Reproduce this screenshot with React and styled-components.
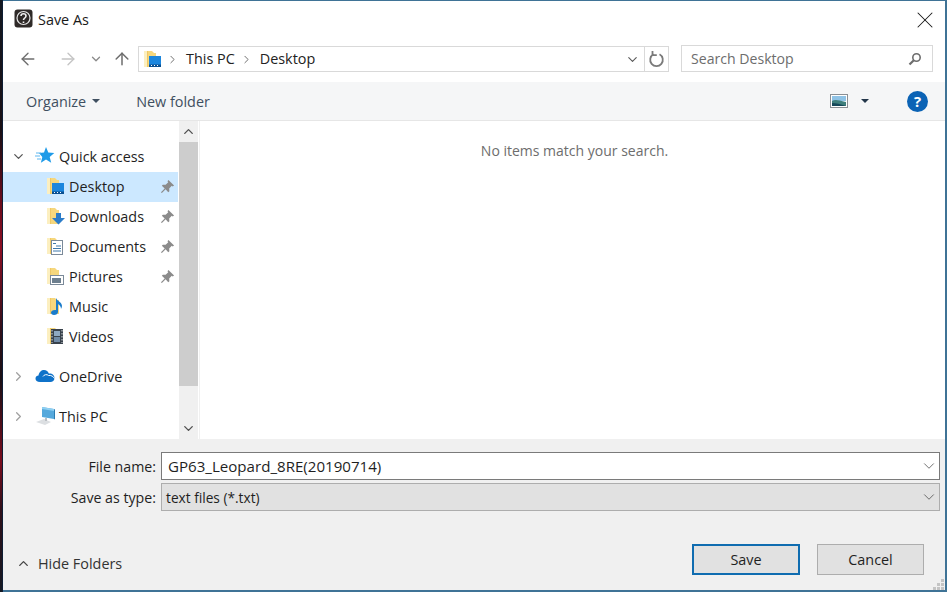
import React from 'react'
import styled, { createGlobalStyle } from 'styled-components'
import { X, ArrowLeft, ArrowRight, ArrowUp, ChevronDown, ChevronRight, ChevronUp } from 'lucide-react'

const GlobalStyle = createGlobalStyle`
  html, body { margin: 0; padding: 0; background: #fff; }
  * { box-sizing: border-box; }
  body { font-family: "Open Sans", "Noto Sans", "Liberation Sans", sans-serif; }
`

const Screen = styled.div`
  display: flex;
  width: 947px;
  height: 592px;
  overflow: hidden;
  background: #14080c;
`
const Wallpaper = styled.div`
  width: 3px;
  flex: none;
  border-right: 1px solid #0e1d33;
  background: linear-gradient(180deg, #141821 0%, #1a1015 22%, #6a0c1c 34%, #8c1024 42%, #30101a 56%, #1a1015 64%, #7a0d1e 78%, #30101a 86%, #141821 100%);
`
const Window = styled.div`
  flex: 1;
  min-width: 0;
  display: flex;
  flex-direction: column;
  border-top: 1px solid #3f7396;
  border-right: 2px solid #3f7396;
  border-bottom: 2px solid #3f7396;
  background: #fff;
  color: #1a1a1a;
  font-size: 14.4px;
`
const TitleBar = styled.div`
  height: 37px;
  flex: none;
  display: flex;
  align-items: center;
  padding: 0 6px 2px 11px;
  gap: 5px;
  font-size: 14.4px;
`
const TitleText = styled.span`
  flex: 1;
  padding-top: 2px;
`
const CloseBtn = styled.div`
  color: #1a1a1a;
  display: flex;
  margin-top: 2px;
`
const NavBar = styled.div`
  height: 44px;
  flex: none;
  display: flex;
  align-items: flex-start;
  padding: 7px 11px 0 15px;
`
const NavBtn = styled.div`
  width: ${p => p.$w}px;
  height: 27px;
  flex: none;
  margin-left: ${p => p.$ml || 0}px;
  display: flex;
  align-items: center;
  justify-content: ${p => p.$justify || 'center'};
  color: ${p => p.$color};
`
const Address = styled.div`
  width: 531px;
  height: 26px;
  flex: none;
  margin-top: 1px;
  margin-left: 6px;
  border: 1px solid #d9d9d9;
  display: flex;
  align-items: center;
  padding-left: 2px;
`
const Crumb = styled.span`
  margin-right: 5px;
  padding-bottom: 2px;
  color: #222;
`
const CrumbArrow = styled.span`
  display: flex;
  color: #6d6d6d;
  margin: 0 7px 0 ${p => p.$left || 0}px;
`
const AddressEnd = styled.div`
  margin-left: auto;
  display: flex;
  align-items: center;
  height: 100%;
`
const AddressDrop = styled.div`
  width: 24px;
  display: flex;
  justify-content: center;
  color: #5a5a5a;
`
const Refresh = styled.div`
  width: 24px;
  height: 100%;
  border-left: 1px solid #d9d9d9;
  display: flex;
  align-items: center;
  justify-content: center;
`
const Search = styled.div`
  width: 252px;
  height: 27px;
  flex: none;
  margin-left: 12px;
  border: 1px solid #d9d9d9;
  display: flex;
  align-items: center;
  justify-content: space-between;
  padding: 0 10px 0 9px;
  color: #6d6d6d;
  font-size: 14.1px;
`
const Toolbar = styled.div`
  height: 39px;
  flex: none;
  display: flex;
  align-items: center;
  padding: 0 17px 0 23px;
  background: #f5f6f7;
  border-bottom: 1px solid #e6e6e6;
  color: #3f4f60;
`
const ToolItem = styled.div`
  display: flex;
  align-items: center;
  gap: ${p => p.$gap ?? 6}px;
  margin-right: ${p => p.$mr || 0}px;
`
const Caret = styled.span`
  width: 0;
  height: 0;
  border-left: 4px solid transparent;
  border-right: 4px solid transparent;
  border-top: 4px solid ${p => p.$color || '#3f4f60'};
`
const Spacer = styled.div`
  flex: 1;
`
const HelpBadge = styled.div`
  width: 21px;
  height: 21px;
  border-radius: 50%;
  background: #0b63b5;
  color: #fff;
  font-weight: 700;
  font-size: 15px;
  display: flex;
  align-items: center;
  justify-content: center;
  margin-left: 38px;
`
const Body = styled.div`
  height: 318px;
  flex: none;
  display: flex;
  background: #fff;
`
const Sidebar = styled.div`
  width: 175px;
  flex: none;
  padding-top: 21px;
  display: flex;
  flex-direction: column;
`
const Row = styled.div`
  height: 30px;
  flex: none;
  display: flex;
  align-items: center;
  padding-left: ${p => (p.$child ? 41 : 8)}px;
  padding-bottom: 2px;
  margin-top: ${p => (p.$gap ? 10 : 0)}px;
  background: ${p => (p.$active ? '#cce8ff' : 'transparent')};
  color: #1f1f1f;
`
const Twisty = styled.span`
  width: 24px;
  display: flex;
  color: ${p => p.$color};
`
const RowIcon = styled.span`
  width: 24px;
  height: 22px;
  flex: none;
  display: flex;
  align-items: center;
  margin-right: ${p => p.$mr || 0}px;
`
const PinSlot = styled.span`
  margin-left: auto;
  margin-right: 3px;
  display: flex;
`
const Scrollbar = styled.div`
  width: 19px;
  flex: none;
  margin-left: 1px;
  background: #f0f0f0;
  display: flex;
  flex-direction: column;
`
const ScrollBtn = styled.div`
  height: 21px;
  flex: none;
  display: flex;
  align-items: center;
  justify-content: center;
  color: #505050;
`
const ScrollThumb = styled.div`
  height: 244px;
  flex: none;
  background: #cdcdcd;
`
const ScrollRest = styled.div`
  flex: 1;
`
const Content = styled.div`
  flex: 1;
  margin-left: 1px;
  border-left: 1px solid #f0f0f0;
  text-align: center;
  padding: 20px 0 0 4px;
  color: #6d6d6d;
  font-size: 14px;
`
const Footer = styled.div`
  flex: 1;
  background: #f0f0f0;
  display: flex;
  flex-direction: column;
  padding: 13px 5px 0 0;
  position: relative;
`
const FieldRow = styled.div`
  display: flex;
  align-items: center;
  height: 28px;
  margin-bottom: 3px;
`
const FieldLabel = styled.label`
  width: 158px;
  flex: none;
  text-align: right;
  padding-right: 5px;
  color: #1f1f1f;
  font-size: 14.2px;
`
const FieldBox = styled.div`
  flex: 1;
  height: 28px;
  display: flex;
  align-items: center;
  justify-content: space-between;
  padding: 0 1px 0 ${p => (p.$select ? 4 : 6)}px;
  background: ${p => (p.$select ? '#e1e1e1' : '#fff')};
  border: 1px solid ${p => (p.$select ? '#adadad' : '#7a7a7a')};
  color: #1f1f1f;
  font-size: ${p => (p.$select ? 13.7 : 15.1)}px;
`
const Bottom = styled.div`
  display: flex;
  align-items: flex-start;
  margin-top: 30px;
  padding-right: 16px;
`
const HideFolders = styled.div`
  display: flex;
  align-items: center;
  gap: 7px;
  margin: 10px 0 0 13px;
  color: #333;
`
const Button = styled.button`
  width: ${p => p.$w}px;
  height: 31px;
  margin-left: ${p => p.$ml || 0}px;
  background: #e1e1e1;
  border: ${p => (p.$primary ? '2px solid #0f6cb0' : '1px solid #adadad')};
  color: #1f1f1f;
  font: inherit;
  padding: 0;
`
const Grip = styled.svg`
  position: absolute;
  right: 0;
  bottom: 0;
`

const Folder = ({ children }) => (
  <svg width="24" height="22" viewBox="0 0 24 22">
    <path d="M3 3h8l2 2h2v14H3z" fill="#f6d77d" />
    <path d="M3 3h3v16H3z" fill="#fcefc0" />
    <path d="M6 3h1v16H6z" fill="#efc866" />
    <g transform="translate(-1 0)">{children}</g>
  </svg>
)

const kinds = {
  desktop: <><rect x="9" y="8" width="12" height="11" fill="#1c86dd" /><rect x="9" y="16.500" width="12" height="2.500" fill="#0b4f8f" /><path d="M11 17.500h1M14 17.500h1M17 17.500h1" stroke="#fff" /></>,
  downloads: <path d="M13 8h5v5h4l-6.500 6.500L9 13h4z" fill="#2b7cc9" />,
  documents: <><rect x="8.500" y="5.500" width="11" height="14" fill="#fff" stroke="#7b8a99" /><path d="M10 8.500h3M13 11h5M10 13.500h8M10 16h8" stroke="#3f79ab" /></>,
  pictures: <><rect x="7.500" y="10.500" width="13" height="9" fill="#fff" stroke="#7b8a99" /><rect x="9" y="13" width="9" height="5" fill="#6d7f8e" /></>,
  music: <path d="M13 3c1 3 6 4 6 8 0 1-.500 2-1 3 0-2-1-4-3-5v8c0 2-2 3-4 3s-3-1-3-2.500 2-3 5-2.500z" fill="#1a7ccb" />,
  videos: <><rect x="8" y="4" width="12" height="15" fill="#39424c" /><path d="M9 5v13M19 5v13" stroke="#d5d9dd" strokeDasharray="1.500 1.500" /><rect x="11" y="6" width="6" height="5" fill="#8ea8c2" /><rect x="11" y="12" width="6" height="5" fill="#6f8aa6" /></>,
}

const Pin = () => (
  <svg width="15" height="15" viewBox="0 0 16 16">
    <path d="M9 1l6 6-1.500 1-1-.800L9.800 10l.200 3-1.200 1L6 11l-4 4-1-1 4-4-3-2.800L3 6l3 .200L8.800 3.500 8 2.500z" fill="#8b8b8b" />
  </svg>
)

const Star = () => (
  <svg width="20" height="20" viewBox="0 0 20 20">
    <path d="M11 1l2.300 5.600 6 .400-4.600 3.900 1.500 5.900-5.200-3.200-5.100 3.200 1.400-5.900L4 7l5-.400z" fill="#1f9be8" />
    <path d="M1 7h5M0 10h5M2 13h4" stroke="#5fb7ef" strokeWidth="1" />
  </svg>
)

const Cloud = () => (
  <svg width="20" height="14" viewBox="0 0 20 14">
    <path d="M5 13c-3 0-4.500-1.500-4.500-3.500S2 6.500 3.500 6.500C4 3 6.500 1 9 1c2.500 0 4 1.500 4.800 3.500 3-.500 5.700 1.500 5.700 4.500 0 2.500-2 4-4 4z" fill="#0f72c9" />
    <path d="M8 7.500c1-2 4-2.500 5.500-1 2.500-.500 5 1 6 3" stroke="#fff" strokeWidth="1" fill="none" />
  </svg>
)

const Computer = () => (
  <svg width="22" height="20" viewBox="0 0 22 20">
    <path d="M7 1l12 2v10L7 11z" fill="#56a9dc" />
    <path d="M7 1l12 2v2L7 3z" fill="#8fd0f2" />
    <path d="M19 3l1 .500V13l-1 .500z" fill="#2d7cb0" />
    <path d="M1 16l8-3 7 3-6 3z" fill="#dcdfe2" />
    <path d="M11 12v3" stroke="#b9bec3" strokeWidth="2" />
  </svg>
)

const RefreshIcon = () => (
  <svg width="17" height="18" viewBox="0 0 17 18">
    <path d="M11.500 4.300a6.300 6.300 0 1 1-6 0" fill="none" stroke="#7a7a7a" strokeWidth="1.800" />
    <path d="M4.500 1v4.200h4.300" fill="none" stroke="#7a7a7a" strokeWidth="1.800" />
  </svg>
)

const Magnifier = () => (
  <svg width="14" height="14" viewBox="0 0 14 14">
    <circle cx="8.500" cy="5.500" r="3.700" fill="none" stroke="#6d6d6d" strokeWidth="1.600" />
    <path d="M5.800 8.200L1.500 12.500" stroke="#6d6d6d" strokeWidth="2.200" />
  </svg>
)

const Landscape = () => (
  <svg width="18" height="14" viewBox="0 0 18 14">
    <rect x="0.500" y="0.500" width="17" height="13" fill="#fff" stroke="#8a8f94" />
    <rect x="2" y="2" width="14" height="5" fill="#8fc3e6" />
    <path d="M2 7c3-2 6-1 14 1v4H2z" fill="#3f7f7c" />
    <path d="M2 9c4 0 8 1 14 3H2z" fill="#15485a" />
  </svg>
)

const AppIcon = () => (
  <svg width="19" height="19" viewBox="0 0 19 19">
    <rect x="0.500" y="0.500" width="18" height="18" rx="3" fill="#2f2a28" />
    <circle cx="9.500" cy="9" r="6.500" fill="none" stroke="#e8e8e8" strokeWidth="1.200" />
    <path d="M7 7c0-3 5-3 5 0 0 2-2.500 2-2.500 4M9.500 12.500v1.500" fill="none" stroke="#f2f2f2" strokeWidth="1.600" />
  </svg>
)

const places = [
  { label: 'Desktop', kind: 'desktop', active: true, pin: true },
  { label: 'Downloads', kind: 'downloads', pin: true },
  { label: 'Documents', kind: 'documents', pin: true },
  { label: 'Pictures', kind: 'pictures', pin: true },
  { label: 'Music', kind: 'music' },
  { label: 'Videos', kind: 'videos' },
]

const App = () => {
  return (
    <Screen>
      <GlobalStyle />
      <Wallpaper />
      <Window>
        <TitleBar>
          <AppIcon />
          <TitleText>Save As</TitleText>
          <CloseBtn><X size={28} strokeWidth={0.9} /></CloseBtn>
        </TitleBar>
        <NavBar>
          <NavBtn $w={20} $color="#6d6d6d"><ArrowLeft size={20} strokeWidth={1.6} /></NavBtn>
          <NavBtn $w={40} $color="#c4c4c4" $justify="flex-end"><ArrowRight size={20} strokeWidth={1.6} /></NavBtn>
          <NavBtn $w={32} $ml={2} $color="#8a8a8a"><ChevronDown size={14} strokeWidth={2.2} /></NavBtn>
          <NavBtn $w={20} $color="#6d6d6d"><ArrowUp size={20} strokeWidth={1.8} /></NavBtn>
          <Address>
            <Folder>{kinds.desktop}</Folder>
            <CrumbArrow $left={1}><ChevronRight size={13} strokeWidth={1.8} /></CrumbArrow>
            <Crumb>This PC</Crumb>
            <CrumbArrow><ChevronRight size={13} strokeWidth={1.8} /></CrumbArrow>
            <Crumb>Desktop</Crumb>
            <AddressEnd>
              <AddressDrop><ChevronDown size={15} strokeWidth={1.8} /></AddressDrop>
              <Refresh><RefreshIcon /></Refresh>
            </AddressEnd>
          </Address>
          <Search>
            <span>Search Desktop</span>
            <Magnifier />
          </Search>
        </NavBar>
        <Toolbar>
          <ToolItem $mr={36}>Organize <Caret /></ToolItem>
          <ToolItem>New folder</ToolItem>
          <Spacer />
          <Landscape />
          <ToolItem $gap={13}><span /><Caret $color="#23364a" /></ToolItem>
          <HelpBadge>?</HelpBadge>
        </Toolbar>
        <Body>
          <Sidebar>
            <Row>
              <Twisty $color="#555"><ChevronDown size={15} strokeWidth={2} /></Twisty>
              <RowIcon><Star /></RowIcon>
              Quick access
            </Row>
            {places.map(p => (
              <Row key={p.label} $child $active={p.active}>
                <RowIcon $mr={1}><Folder>{kinds[p.kind]}</Folder></RowIcon>
                {p.label}
                {p.pin && <PinSlot><Pin /></PinSlot>}
              </Row>
            ))}
            <Row $gap>
              <Twisty $color="#a0a0a0"><ChevronRight size={15} strokeWidth={2} /></Twisty>
              <RowIcon><Cloud /></RowIcon>
              OneDrive
            </Row>
            <Row $gap>
              <Twisty $color="#a0a0a0"><ChevronRight size={15} strokeWidth={2} /></Twisty>
              <RowIcon><Computer /></RowIcon>
              This PC
            </Row>
          </Sidebar>
          <Scrollbar>
            <ScrollBtn><ChevronUp size={15} strokeWidth={2.2} /></ScrollBtn>
            <ScrollThumb />
            <ScrollRest />
            <ScrollBtn><ChevronDown size={15} strokeWidth={2.2} /></ScrollBtn>
          </Scrollbar>
          <Content>No items match your search.</Content>
        </Body>
        <Footer>
          <FieldRow>
            <FieldLabel>File name:</FieldLabel>
            <FieldBox>
              <span>GP63_Leopard_8RE(20190714)</span>
              <ChevronDown size={18} strokeWidth={1} color="#444" />
            </FieldBox>
          </FieldRow>
          <FieldRow>
            <FieldLabel>Save as type:</FieldLabel>
            <FieldBox $select>
              <span>text files (*.txt)</span>
              <ChevronDown size={18} strokeWidth={1} color="#444" />
            </FieldBox>
          </FieldRow>
          <Bottom>
            <HideFolders>
              <ChevronUp size={15} strokeWidth={2.2} color="#444" />
              Hide Folders
            </HideFolders>
            <Spacer />
            <Button $w={108} $primary>Save</Button>
            <Button $w={107} $ml={17}>Cancel</Button>
          </Bottom>
          <Grip width="12" height="12" viewBox="0 0 12 12">
            <path d="M8 1h3v3H8zM4 5h3v3H4zM8 5h3v3H8zM0 9h3v3H0zM4 9h3v3H4zM8 9h3v3H8z" fill="#c4c4c4" />
          </Grip>
        </Footer>
      </Window>
    </Screen>
  )
}

export default App
